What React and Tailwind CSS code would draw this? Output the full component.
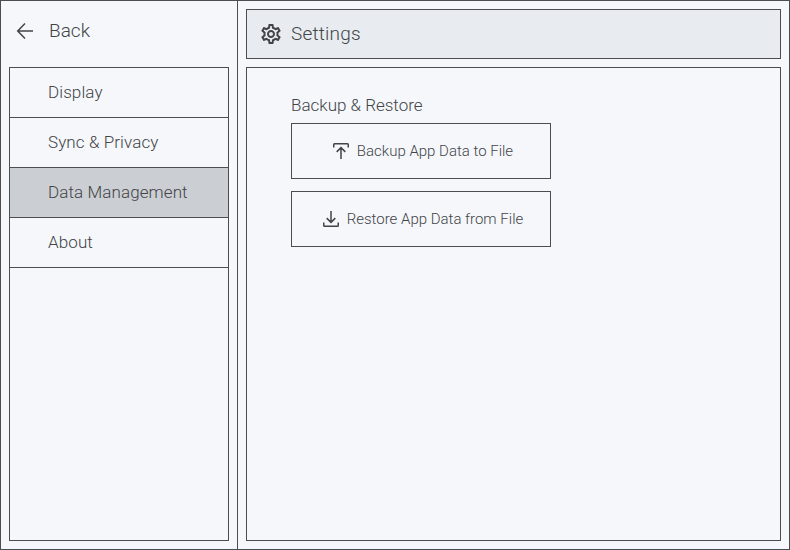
import React from 'react';
import { MdOutlineSettings } from 'react-icons/md';

const items = [
  { label: 'Display', spacing: 'tracking-[0.1px]' },
  { label: 'Sync & Privacy', spacing: 'tracking-[0.1px]' },
  { label: 'Data Management', spacing: 'tracking-[0.1px]', active: true },
  { label: 'About', spacing: 'tracking-[0.1px]' },
];

function BackIcon() {
  return (
    <svg width="24" height="24" viewBox="0 0 24 24" fill="none" stroke="currentColor" strokeWidth="1.5">
      <path d="M20 12H5M12 4.5L4.7 12L12 19.5" />
    </svg>
  );
}

function BackupIcon() {
  return (
    <svg width="24" height="24" viewBox="0 0 24 24" fill="none" stroke="currentColor" strokeWidth="1.5">
      <path d="M4.75 8.5V5.5Q4.75 4.75 5.5 4.75H18.5Q19.25 4.75 19.25 5.5V8.5M12 20V9M7.7 12.9L12 8.6L16.3 12.9" />
    </svg>
  );
}

function RestoreIcon() {
  return (
    <svg width="24" height="24" viewBox="0 0 24 24" fill="none" stroke="currentColor" strokeWidth="1.5">
      <path d="M4.75 15.5V18.5Q4.75 19.25 5.5 19.25H18.5Q19.25 19.25 19.25 18.5V15.5M12 4V15M7.7 11.1L12 15.4L16.3 11.1" />
    </svg>
  );
}

export default function App() {
  return (
    <div className="flex h-[550px] w-[790px] border border-[#4c4d52] bg-[#f5f7fb] font-['Roboto',sans-serif] font-light text-[#424448]">
      <aside className="flex w-[237px] flex-col border-r border-[#4c4d52] px-2 pb-2">
        <button className="flex h-[66px] items-center gap-2 pb-[6px] pl-1 text-left text-[19px]">
          <BackIcon />
          <span className="ml-1">Back</span>
        </button>
        <nav className="flex-1 border border-[#4c4d52]">
          {items.map((item) => (
            <div
              key={item.label}
              className={`flex h-[50px] items-center border-b border-[#4c4d52] pl-[38px] text-[17px] ${item.spacing} ${item.active ? 'bg-[#cbced2]' : ''}`}
            >
              {item.label}
            </div>
          ))}
        </nav>
      </aside>
      <main className="flex flex-1 flex-col gap-2 p-2">
        <header className="flex h-[50px] items-center gap-2 border border-[#4c4d52] bg-[#e8ecf0] pl-3 text-[19px]">
          <MdOutlineSettings size={24} />
          <h1 className="tracking-[0.2px]">Settings</h1>
        </header>
        <section className="flex flex-1 flex-col border border-[#4c4d52] pl-11 pt-[25px]">
          <h2 className="h-[30px] text-[17px] leading-[25px]">Backup &amp; Restore</h2>
          <div className="flex w-[260px] flex-col gap-3">
            <button className="flex h-14 items-center justify-center gap-1 border border-[#4c4d52] text-[15px]">
              <BackupIcon />
              <span>Backup App Data to File</span>
            </button>
            <button className="flex h-14 items-center justify-center gap-1 border border-[#4c4d52] text-[15px]">
              <RestoreIcon />
              <span>Restore App Data from File</span>
            </button>
          </div>
        </section>
      </main>
    </div>
  );
}
